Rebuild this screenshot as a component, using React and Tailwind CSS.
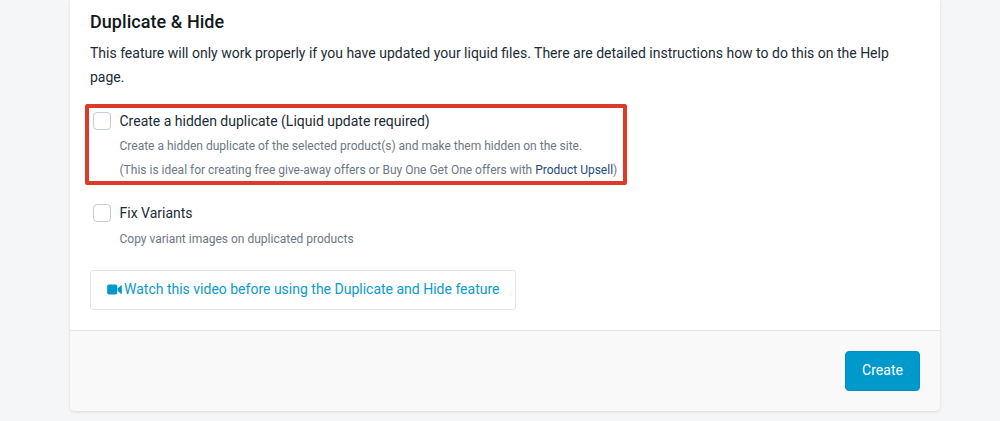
import React from "react";

function Check() {
  return <span className="mt-[1px] block h-[18px] w-[18px] shrink-0 rounded-[4px] border border-[#c4cdd5] bg-white" />;
}

export default function App() {
  return (
    <div className="h-[421px] overflow-hidden bg-[#f4f6f8] pl-[70px] pr-[60px] font-['Roboto',sans-serif] text-[14px]">
      <div className="h-[411px] overflow-hidden rounded-b-[5px] bg-white shadow-[0_1px_3px_rgba(63,63,68,0.15)] flex flex-col">
        <div className="h-[330px] px-[20px] pt-[10px]">
          <h2 className="text-[18px] leading-[24px] font-medium text-[#111820] tracking-[0.05px]">Duplicate &amp; Hide</h2>
          <p className="mt-[7px] text-[14px] leading-[24px] text-[#212b36]">
            This feature will only work properly if you have updated your liquid files. There are detailed instructions how to do this on the Help page.
          </p>
          <div className="mt-[15px] -ml-[5px] h-[81px] w-[542px] rounded-[2px] border-[4px] border-[#dd3a2a] pl-[4px] pt-[3px]">
            <div className="flex gap-[8.5px]">
              <Check />
              <div>
                <div className="text-[14px] leading-[20px] text-[#212b36]">Create a hidden duplicate (Liquid update required)</div>
                <div className="mt-[3px] text-[12px] leading-[24px] text-[#6b7783]">Create a hidden duplicate of the selected product(s) and make them hidden on the site.</div>
                <div className="text-[12px] leading-[24px] text-[#6b7783]">(This is ideal for creating free give-away offers or Buy One Get One offers with <span className="text-[#254a7c]">Product Upsell</span>)</div>
              </div>
            </div>
          </div>
          <div className="mt-[18px] ml-[3px] flex gap-[8.5px]">
            <Check />
            <div>
              <div className="text-[14px] leading-[20px] text-[#212b36]">Fix Variants</div>
              <div className="mt-[4px] text-[12px] leading-[24px] text-[#6b7783]">Copy variant images on duplicated products</div>
            </div>
          </div>
          <div className="mt-[19px] flex h-[40px] w-[426px] items-center gap-[3px] rounded-[3px] border border-[#e3e5e8] pb-[1px] pl-[16px] text-[14px] text-[#0a9bcd]">
            <svg viewBox="0 0 16 12" className="h-[11px] w-[15px] fill-[#0099cc]">
              <rect x="0" y="0.5" width="11" height="11" rx="2" />
              <path d="M11.5 4.5 15 1.5c.4-.3 1-.1 1 .5v8c0 .6-.6.8-1 .5l-3.5-3z" />
            </svg>
            <span className="-ml-[1px]">Watch this video before using the Duplicate and Hide feature</span>
          </div>
        </div>
        <div className="flex flex-1 items-start justify-end border-t border-[#e3e5e8] bg-[#f9f9fa] pr-[20px] pt-[20px]">
          <button className="h-[40px] w-[75px] rounded-[4px] border border-[#0090c0] bg-[#0099cc] pb-[1px] text-[14px] font-normal text-white">Create</button>
        </div>
      </div>
    </div>
  );
}
